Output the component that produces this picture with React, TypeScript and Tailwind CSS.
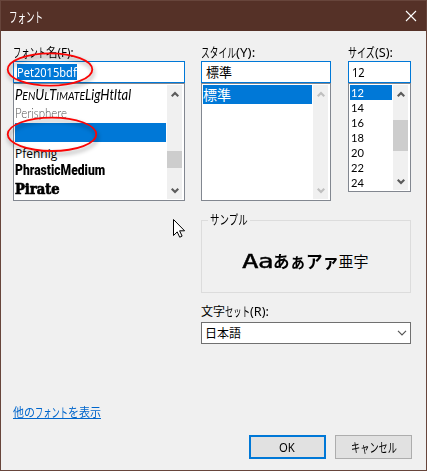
import { ReactNode, useLayoutEffect, useRef, useState } from "react";

/** Text condensed or expanded horizontally to an exact width. */
function Fit({ w, className = "", children }: { w: number; className?: string; children: ReactNode }) {
  const ref = useRef<HTMLSpanElement>(null);
  const [scale, setScale] = useState(1);
  useLayoutEffect(() => {
    if (ref.current) setScale(w / ref.current.offsetWidth);
  }, [w]);
  return (
    <span className="flex shrink-0 items-center" style={{ width: w }}>
      <span ref={ref} className={`shrink-0 origin-left whitespace-nowrap ${className}`} style={{ transform: `scaleX(${scale})` }}>
        {children}
      </span>
    </span>
  );
}

function Arrow({ up = false, dim = false }: { up?: boolean; dim?: boolean }) {
  return (
    <svg width="8" height="7" viewBox="0 0 8 7" fill="none" stroke={dim ? "#bfbfbf" : "#5b5b5b"} strokeWidth="2.2" className="shrink-0">
      <path d={up ? "M.7 5.3 4 2l3.3 3.3" : "M.7 1.7 4 5l3.3-3.3"} />
    </svg>
  );
}

function Scrollbar({ dim = false, thumb }: { dim?: boolean; thumb?: ReactNode }) {
  return (
    <div className="flex w-[15px] shrink-0 flex-col items-center bg-[#f0f0f0] pt-[6px] pb-[5px]">
      <Arrow up dim={dim} />
      {thumb}
      <div className="grow" />
      <Arrow dim={dim} />
    </div>
  );
}

const sizes = ["12", "14", "16", "18", "20", "22", "24"];

export default function App() {
  return (
    <div className="relative flex h-[471px] w-[427px] flex-col overflow-hidden border border-[#67453b] bg-[#f0f0f0] font-['Noto_Sans','Noto_Sans_CJK_JP',sans-serif] text-[12px] leading-[15px] text-black">
      <header className="flex h-[30px] shrink-0 items-center justify-between bg-[#553127] pr-[9px] pl-[8px] text-white">
        <Fit w={34} className="text-[14px]">フォント</Fit>
        <svg width="12" height="12" viewBox="0 0 12 12" stroke="white" strokeWidth="1.1">
          <path d="M1 1l10 10M11 1L1 11" />
        </svg>
      </header>

      <main className="flex grow flex-col pt-[12px] pl-[12px]">
        <div className="flex items-start">
          <section className="w-[172px]">
            <div className="flex h-[18px] items-center">
              <Fit w={33} className="text-[13px]">フォント</Fit>
              <Fit w={28}>名(F):</Fit>
            </div>
            <div className="flex h-[22px] items-center border border-[#0078d7] bg-white pl-[3px]">
              <div className="flex h-[16px] items-center bg-[#0078d7] text-white">
                <Fit w={60}>Pet2015bdf</Fit>
              </div>
            </div>
            <div className="flex h-[118px] border border-[#828790] bg-white p-px pr-[2px]">
              <div className="flex w-[151px] flex-col">
                <div className="flex h-[19px] items-center">
                  <Fit w={116} className="font-['Lato'] text-[15px] italic">
                    P<span className="text-[12px]">EN</span>U<span className="text-[12px]">L</span>T<span className="text-[12px]">IMATE</span>LigHtItal
                  </Fit>
                </div>
                <div className="flex h-[19px] items-center text-[#555]">
                  <Fit w={52} className="font-['Lato'] text-[13px] font-light">Perisphere</Fit>
                </div>
                <div className="h-[19px] bg-[#0078d7]" />
                <div className="flex h-[19px] items-center pt-[3px]">
                  <Fit w={42} className="font-['Open_Sans'] text-[12px]">Pfennig</Fit>
                </div>
                <div className="flex h-[19px] items-center">
                  <Fit w={90} className="font-['Roboto'] text-[14px] font-black">PhrasticMedium</Fit>
                </div>
                <div className="flex h-[19px] items-center">
                  <Fit w={45} className="font-['DejaVu_Serif'] text-[14px] font-black [-webkit-text-stroke:0.7px_black]">Pirate</Fit>
                </div>
              </div>
              <div className="w-px" />
              <Scrollbar thumb={<div className="mt-[53px] h-[17px] w-[15px] shrink-0 bg-[#cdcdcd]" />} />
            </div>
          </section>

          <section className="ml-[16px] w-[130px]">
            <div className="flex h-[18px] items-center">
              <Fit w={35} className="text-[13px]">スタイル</Fit>
              <Fit w={19}>(Y):</Fit>
            </div>
            <div className="flex h-[22px] items-center border border-[#0078d7] bg-white pl-[4px]">
              <Fit w={26} className="text-[13px]">標準</Fit>
            </div>
            <div className="flex h-[118px] border border-[#828790] bg-white p-px">
              <div className="w-[109px]">
                <div className="flex h-[19px] items-center bg-[#0078d7] text-white">
                  <Fit w={28} className="text-[14px]">標準</Fit>
                </div>
              </div>
              <div className="w-px" />
              <Scrollbar dim />
            </div>
          </section>

          <section className="ml-[17px] w-[63px]">
            <div className="flex h-[18px] items-center">
              <Fit w={27} className="text-[13px]">サイズ</Fit>
              <Fit w={18}>(S):</Fit>
            </div>
            <div className="flex h-[22px] items-center border border-[#0078d7] bg-white pl-[3px]">
              <Fit w={13}>12</Fit>
            </div>
            <div className="flex h-[109px] border border-[#828790] bg-white p-px">
              <div className="w-[42px]">
                {sizes.map((s, i) => (
                  <div key={s} className={`flex h-[15px] items-center pl-px ${i === 0 ? "bg-[#0078d7] text-white" : ""}`}>
                    <Fit w={13} className="font-['Lato'] text-[12px]">{s}</Fit>
                  </div>
                ))}
              </div>
              <div className="w-px" />
              <Scrollbar thumb={<div className="mt-[22px] h-[31px] w-[15px] shrink-0 bg-[#cdcdcd]" />} />
            </div>
          </section>
        </div>

        <div className="mt-[11px] ml-[188px] flex w-[210px] flex-col">
          <fieldset className="h-[81px] border border-[#dcdcdc] pl-[6px]">
            <legend className="h-[16px] px-[2px]">
              <Fit w={38} className="text-[13px]">サンプル</Fit>
            </legend>
            <div className="flex h-[50px] items-center justify-center pt-[15px] pr-[8px]">
              <Fit w={16} className="font-['DejaVu_Sans_Mono'] text-[19px] leading-[18px] [-webkit-text-stroke:0.4px_black]">A</Fit>
              <Fit w={15} className="font-['DejaVu_Sans_Mono'] text-[19px] leading-[18px] [-webkit-text-stroke:0.4px_black]">a</Fit>
              <Fit w={66} className="font-['Noto_Sans_CJK_JP'] text-[17px] leading-[18px] font-bold">あぁアァ</Fit>
              <Fit w={30} className="font-['Noto_Sans_CJK_JP'] text-[15px] leading-[18px]">亜宇</Fit>
            </div>
          </fieldset>
          <div className="mt-[9px] flex h-[18px] items-center">
            <Fit w={24}>文字</Fit>
            <Fit w={25} className="text-[13px]">セット</Fit>
            <Fit w={19}>(R):</Fit>
          </div>
          <div className="mt-[2px] flex h-[22px] items-center justify-between border border-[#707070] bg-white pr-[3px] pl-[3px]">
            <Fit w={36}>日本語</Fit>
            <svg width="10" height="6" viewBox="0 0 10 6" fill="none" stroke="#555" strokeWidth="1.2">
              <path d="M1 .8l4 4 4-4" />
            </svg>
          </div>
        </div>

        <div className="mt-[59px] h-[16px] w-[88px] border-b border-[#0066cc] text-[#0066cc]">
          <div className="flex h-[18px] items-center">
            <Fit w={22}>他の</Fit>
            <Fit w={33} className="text-[13px]">フォント</Fit>
            <Fit w={33}>を表示</Fit>
          </div>
        </div>

        <div className="mt-[16px] ml-[236px] flex gap-[9px]">
          <button className="flex h-[24px] w-[77px] items-center justify-center border-2 border-[#0078d7] bg-[#e1e1e1] pr-[2px]">
            <Fit w={16}>OK</Fit>
          </button>
          <button className="flex h-[24px] w-[77px] items-center justify-center border border-[#adadad] bg-[#e1e1e1]">
            <Fit w={46} className="text-[13px]">キャンセル</Fit>
          </button>
        </div>
      </main>

      <svg className="absolute top-0 left-0 drop-shadow-[1px_3px_2px_rgba(0,0,0,0.4)]" width="120" height="170" viewBox="1 1 120 170" fill="none" stroke="#fa0505" strokeWidth="1.8">
        <ellipse cx="50" cy="69.5" rx="42.3" ry="16.2" />
        <ellipse cx="52" cy="134.3" rx="44.3" ry="16.7" />
      </svg>
      <svg className="absolute top-[217px] left-[171px]" width="14" height="21" viewBox="0 0 14 21" fill="white" stroke="black" strokeWidth="1">
        <path d="M1.5 1.5v16l3.7-3.6 2.5 5.3 2.4-1.1-2.5-5.3h5z" />
      </svg>
    </div>
  );
}
